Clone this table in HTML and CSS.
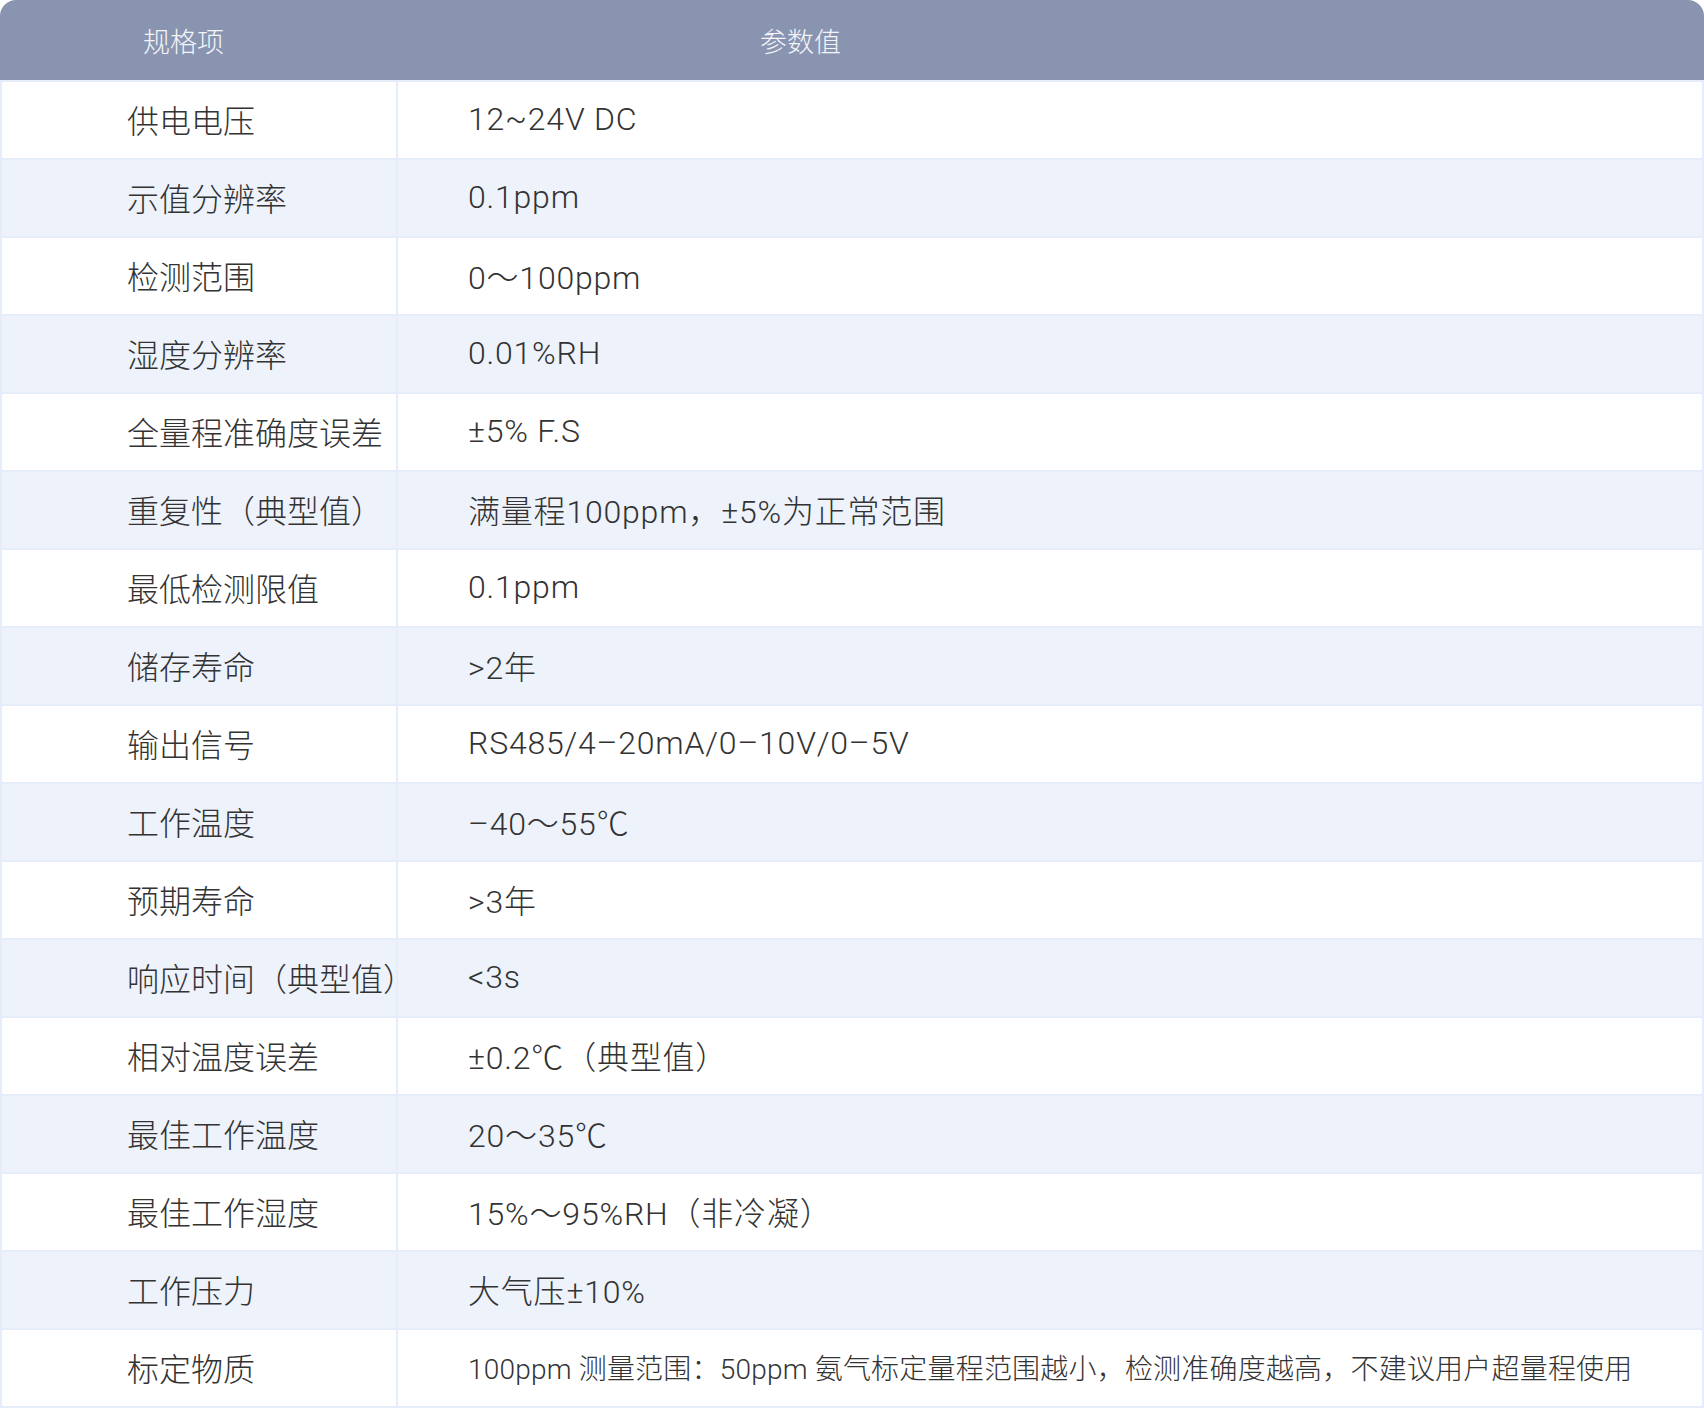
FILE: index.html
```html
<!DOCTYPE html>
<html lang="zh-CN">
<head>
<meta charset="utf-8">
<title>规格参数</title>
<link rel="stylesheet" href="styles.css">
</head>
<body>
<div class="spec">
  <div class="head">
    <div class="hk">规格项</div>
    <div class="hv">参数值</div>
  </div>
  <div class="row"><div class="k">供电电压</div><div class="v">12~24V DC</div></div>
  <div class="row alt"><div class="k">示值分辨率</div><div class="v">0.1ppm</div></div>
  <div class="row"><div class="k">检测范围</div><div class="v">0～100ppm</div></div>
  <div class="row alt"><div class="k">湿度分辨率</div><div class="v">0.01%RH</div></div>
  <div class="row"><div class="k">全量程准确度误差</div><div class="v">±5% F.S</div></div>
  <div class="row alt"><div class="k">重复性（典型值）</div><div class="v">满量程100ppm，±5%为正常范围</div></div>
  <div class="row"><div class="k">最低检测限值</div><div class="v">0.1ppm</div></div>
  <div class="row alt"><div class="k">储存寿命</div><div class="v">&gt;2年</div></div>
  <div class="row"><div class="k">输出信号</div><div class="v">RS485/4–20mA/0–10V/0–5V</div></div>
  <div class="row alt"><div class="k">工作温度</div><div class="v">–40～55℃</div></div>
  <div class="row"><div class="k">预期寿命</div><div class="v">&gt;3年</div></div>
  <div class="row alt"><div class="k">响应时间（典型值）</div><div class="v">&lt;3s</div></div>
  <div class="row"><div class="k">相对温度误差</div><div class="v">±0.2℃（典型值）</div></div>
  <div class="row alt"><div class="k">最佳工作温度</div><div class="v">20～35℃</div></div>
  <div class="row"><div class="k">最佳工作湿度</div><div class="v">15%～95%RH（非冷凝）</div></div>
  <div class="row alt"><div class="k">工作压力</div><div class="v">大气压±10%</div></div>
  <div class="row last"><div class="k">标定物质</div><div class="v small">100ppm 测量范围：50ppm 氨气标定量程范围越小，检测准确度越高，不建议用户超量程使用</div></div>
</div>
</body>
</html>
```

FILE: styles.css
```css
html, body {
  margin: 0;
  padding: 0;
  background: #ffffff;
}

.spec {
  width: 1704px;
  font-family: Roboto, "Noto Sans CJK SC", sans-serif;
  font-weight: 300;
  color: #333333;
}

.head {
  display: flex;
  align-items: center;
  height: 80px;
  background: #8994b1;
  border-radius: 16px 16px 0 0;
  color: #f4f5f9;
  font-size: 27px;
}

.hk {
  width: 400px;
  box-sizing: border-box;
  padding-left: 143px;
}

.hv {
  padding-left: 360px;
}

.row {
  display: flex;
  height: 76px;
  border: 2px solid #e5ecfa;
  border-bottom: none;
  background: #ffffff;
}

.row.alt {
  background: #edf2fb;
}

.row.last {
  border-bottom: 2px solid #e5ecfa;
}

.k {
  width: 396px;
  flex: none;
  box-sizing: border-box;
  padding-left: 125px;
  border-right: 2px solid #e5ecfa;
  display: flex;
  align-items: center;
  padding-bottom: 2px;
  font-size: 32px;
  white-space: nowrap;
}

.v {
  flex: 1;
  padding-left: 70px;
  display: flex;
  align-items: center;
  padding-bottom: 2px;
  font-size: 32px;
  letter-spacing: 0.8px;
  white-space: nowrap;
}

.v.small {
  font-size: 28px;
  letter-spacing: 0.2px;
}
```
